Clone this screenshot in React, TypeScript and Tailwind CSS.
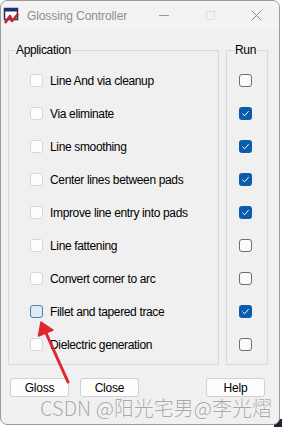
import React from "react";

const apps: [string, boolean][] = [
  ["Line And via cleanup", false],
  ["Via eliminate", true],
  ["Line smoothing", true],
  ["Center lines between pads", true],
  ["Improve line entry into pads", true],
  ["Line fattening", false],
  ["Convert corner to arc", false],
  ["Fillet and tapered trace", true],
  ["Dielectric generation", false],
];

function Check({ checked }: { checked: boolean }) {
  if (checked) {
    return (
      <div className="w-[13px] h-[13px] rounded-[3px] bg-[#0b5cad] flex items-center justify-center">
        <svg width="9" height="9" viewBox="0 0 9 9">
          <path d="M1.5 4.8 L3.6 6.8 L7.6 2.2" fill="none" stroke="#ffffff" strokeWidth="1" />
        </svg>
      </div>
    );
  }
  return <div className="w-[13px] h-[13px] rounded-[3px] border border-[#6f6f6f] bg-[#fbfbfb]" />;
}

function AppBox({ hover }: { hover: boolean }) {
  if (hover) {
    return <div className="w-[13px] h-[13px] rounded-[3px] border border-[#4a7fae] bg-[#dcebf7]" />;
  }
  return <div className="w-[13px] h-[13px] rounded-[3px] border border-[#d6d6d6] bg-[#fdfdfd]" />;
}

export default function App() {
  return (
    <div
      className="relative w-[282px] h-[427px] bg-[#ffffff] overflow-hidden"
      style={{ fontFamily: '"Liberation Sans", Arial, sans-serif' }}
    >
      <div className="absolute right-0 bottom-0 w-[8px] h-[8px] bg-[#1c2230]" />
      <div className="relative w-[280px] h-[425px] rounded-[7px] border border-[#9c9c9c] bg-[#f0f0f0] flex flex-col">
        {/* Title bar */}
        <div className="h-[29px] flex items-center bg-[#f3f3f3] rounded-t-[7px]">
          <svg className="ml-[2px]" width="18" height="18" viewBox="0 0 18 18">
            <rect x="1.5" y="1.5" width="13" height="11" fill="#ffffff" stroke="#1f2f6e" strokeWidth="1.5" />
            <rect x="1.5" y="1.5" width="13" height="3" fill="#1f2f6e" />
            <path d="M2 16 L7 9 L9 14 L15 7" fill="none" stroke="#c0262c" strokeWidth="2.6" strokeLinejoin="round" />
          </svg>
          <span className="ml-[6px] text-[12px] text-[#8f8f8f] tracking-[-0.1px]">Glossing Controller</span>
          <div className="ml-auto flex items-center">
            <div className="w-[46px] flex justify-center">
              <div className="w-[10px] h-[1px] bg-[#9a9a9a]" />
            </div>
            <div className="w-[46px] flex justify-center">
              <div className="w-[9px] h-[9px] border border-[#dedede]" />
            </div>
            <div className="w-[46px] flex justify-center">
              <svg width="11" height="11" viewBox="0 0 11 11">
                <path d="M0.5 0.5 L10.5 10.5 M10.5 0.5 L0.5 10.5" stroke="#8a8a8a" strokeWidth="1" />
              </svg>
            </div>
          </div>
        </div>

        {/* Body */}
        <div className="flex pl-[7px] pt-[13px] gap-[7px] text-[12px] text-[#000000] tracking-[-0.35px]">
          <fieldset className="w-[211px] border border-[#d9d9d9] pt-[7px] pb-[3px]">
            <legend className="ml-[6px] px-[1px] leading-[14px]">Application</legend>
            {apps.map(([label], i) => (
              <div key={label} className="h-[33px] flex items-center pl-[21px] gap-[7px]">
                <AppBox hover={i === 7} />
                <span className="leading-[14px]">{label}</span>
              </div>
            ))}
          </fieldset>
          <fieldset className="w-[42px] border border-[#d9d9d9] pt-[7px] pb-[3px]">
            <legend className="ml-[7px] px-[1px] leading-[14px]">Run</legend>
            {apps.map(([label, run]) => (
              <div key={label} className="h-[33px] flex items-center pl-[12px]">
                <Check checked={run} />
              </div>
            ))}
          </fieldset>
        </div>

        {/* Buttons */}
        <div className="flex items-center pl-[9px] pr-[14px] mt-[13px] text-[12px] tracking-[-0.2px]">
          <button className="w-[59px] h-[19px] rounded-[3px] border border-[#d0d0d0] bg-[#fdfdfd] leading-[14px]">Gloss</button>
          <button className="ml-[11px] w-[59px] h-[19px] rounded-[3px] border border-[#d0d0d0] bg-[#fdfdfd] leading-[14px]">Close</button>
          <button className="ml-auto w-[59px] h-[19px] rounded-[3px] border border-[#d0d0d0] bg-[#fdfdfd] leading-[14px]">Help</button>
        </div>
      </div>

      {/* Red arrow */}
      <svg className="absolute left-0 top-0 pointer-events-none" width="282" height="427" viewBox="0 0 282 427">
        <path d="M68 382 L46 333" stroke="#e0262f" strokeWidth="3" strokeLinecap="round" />
        <path d="M41 322 L38.5 336 L53 330 Z" fill="#e0262f" stroke="#e0262f" strokeWidth="1.5" strokeLinejoin="round" />
      </svg>

      {/* Watermark */}
      <div
        className="absolute left-[40px] top-[395px] text-[20px] leading-[25px] font-light text-[#a8a8a8] whitespace-nowrap"
        style={{
          fontFamily: '"Noto Sans CJK SC", "Liberation Sans", sans-serif',
          textShadow: "0 0 1px #ffffff, 0 0 1px #ffffff",
        }}
      >
        CSDN @阳光宅男@李光熠
      </div>
    </div>
  );
}
